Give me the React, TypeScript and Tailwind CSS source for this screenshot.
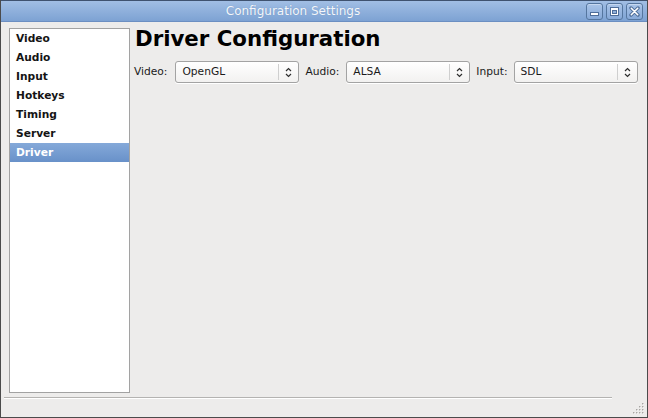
import { useState } from 'react'

const pages = ['Video', 'Audio', 'Input', 'Hotkeys', 'Timing', 'Server', 'Driver']

function Chevrons() {
  return (
    <svg width="7" height="11" viewBox="0 0 7 11" className="shrink-0">
      <path d="M1 4 L3.5 1.5 L6 4" fill="none" stroke="#2e2e2e" strokeWidth="1.2" />
      <path d="M1 7 L3.5 9.5 L6 7" fill="none" stroke="#2e2e2e" strokeWidth="1.2" />
    </svg>
  )
}

function Combo({ value }: { value: string }) {
  return (
    <div className="flex items-center w-[124px] h-[22px] shrink-0 rounded-[3px] border border-[#a3a3a3] bg-gradient-to-b from-[#ffffff] to-[#f2f1f0] shadow-[0_1px_0_#ffffff]">
      <span className="flex-1 pl-[6px] text-[10.67px] text-[#1a1a1a]">{value}</span>
      <div className="w-px h-[16px] bg-[#cfcfcf] mr-[6px]" />
      <div className="w-[7px] mr-[6px] flex items-center">
        <Chevrons />
      </div>
    </div>
  )
}

function TitleButton({ kind }: { kind: 'min' | 'max' | 'close' }) {
  return (
    <div className="w-[17px] h-[17px] rounded-[3px] border border-[#55769f] bg-gradient-to-b from-[#a9c4e8] to-[#87a9d8] shadow-[inset_0_1px_0_#c6d8f0] flex items-center justify-center">
      <svg width="11" height="11" viewBox="0 0 11 11">
        {kind === 'min' && (
          <rect x="1.5" y="6.5" width="8" height="3" fill="#ffffff" stroke="#4f6e9a" strokeWidth="1" />
        )}
        {kind === 'max' && (
          <>
            <rect x="1.5" y="1.5" width="8" height="8" fill="#ffffff" stroke="#4f6e9a" strokeWidth="1" />
            <rect x="3.5" y="4.5" width="4" height="3" fill="#90b0db" stroke="#4f6e9a" strokeWidth="1" />
          </>
        )}
        {kind === 'close' && (
          <>
            <path d="M2 2 L9 9 M9 2 L2 9" stroke="#4f6e9a" strokeWidth="3.4" strokeLinecap="round" />
            <path d="M2.3 2.3 L8.7 8.7 M8.7 2.3 L2.3 8.7" stroke="#ffffff" strokeWidth="1.6" strokeLinecap="round" />
          </>
        )}
      </svg>
    </div>
  )
}

function Grip() {
  const dots = [
    [10, 0],
    [7, 3], [10, 3],
    [4, 6], [7, 6], [10, 6],
    [1, 9], [4, 9], [7, 9], [10, 9],
  ]
  return (
    <svg width="13" height="12" viewBox="0 0 13 12">
      {dots.map(([x, y], i) => (
        <g key={i}>
          <rect x={x + 1} y={y + 1} width="1" height="1" fill="#ffffff" />
          <rect x={x} y={y} width="1.4" height="1.4" fill="#a8a6a3" />
        </g>
      ))}
    </svg>
  )
}

export default function App() {
  const [selected, setSelected] = useState('Driver')

  return (
    <div className="w-[648px] h-[418px] flex flex-col bg-[#edeceb] border border-t-0 border-[#4b4b4b] font-['DejaVu_Sans',sans-serif] overflow-hidden">
      {/* Title bar */}
      <div className="relative h-[22px] shrink-0 flex items-center justify-center pr-[62px] border-t border-[#3f526f] bg-gradient-to-b from-[#a1bee4] to-[#7da2d3] border-b border-b-[#6c8fc2]">
        <span className="text-[12px] text-[#f4f7fb] [text-shadow:0_0_1px_#6d8fbd]">Configuration Settings</span>
        <div className="absolute right-[4px] top-[2px] flex gap-[3px]">
          <TitleButton kind="min" />
          <TitleButton kind="max" />
          <TitleButton kind="close" />
        </div>
      </div>

      {/* Body */}
      <div className="flex flex-1 pt-[6px] pl-[8px] pr-[9px]">
        <div className="w-[121px] h-[365px] shrink-0 border border-[#a2a2a2] bg-white">
          {pages.map(p => (
            <div
              key={p}
              onClick={() => setSelected(p)}
              className={`h-[19px] leading-[19px] pl-[6px] text-[10.67px] font-bold cursor-default ${
                selected === p
                  ? 'bg-gradient-to-b from-[#85a9d9] to-[#6891c9] text-white'
                  : 'text-[#141414]'
              }`}
            >
              {p}
            </div>
          ))}
        </div>

        <div className="flex-1 ml-[4px]">
          <h1 className="text-[21.3px] leading-[22px] font-bold text-black ml-[1px]">Driver Configuration</h1>
          <div className="flex items-center mt-[11px] text-[10.67px] text-[#1a1a1a]">
            <span className="mr-[8px]">Video:</span>
            <Combo value="OpenGL" />
            <span className="ml-[6px] mr-[7px]">Audio:</span>
            <Combo value="ALSA" />
            <span className="ml-[6px] mr-[6px]">Input:</span>
            <Combo value="SDL" />
          </div>
        </div>
      </div>

      {/* Status bar */}
      <div className="h-[20px] shrink-0 flex items-start mt-[4px] pl-[3px] pr-[2px]">
        <div className="flex-1 border-t border-[#b4b3b1] shadow-[0_1px_0_#ffffff] mr-[20px]" />
        <div className="self-end mb-[2px]">
          <Grip />
        </div>
      </div>
    </div>
  )
}
